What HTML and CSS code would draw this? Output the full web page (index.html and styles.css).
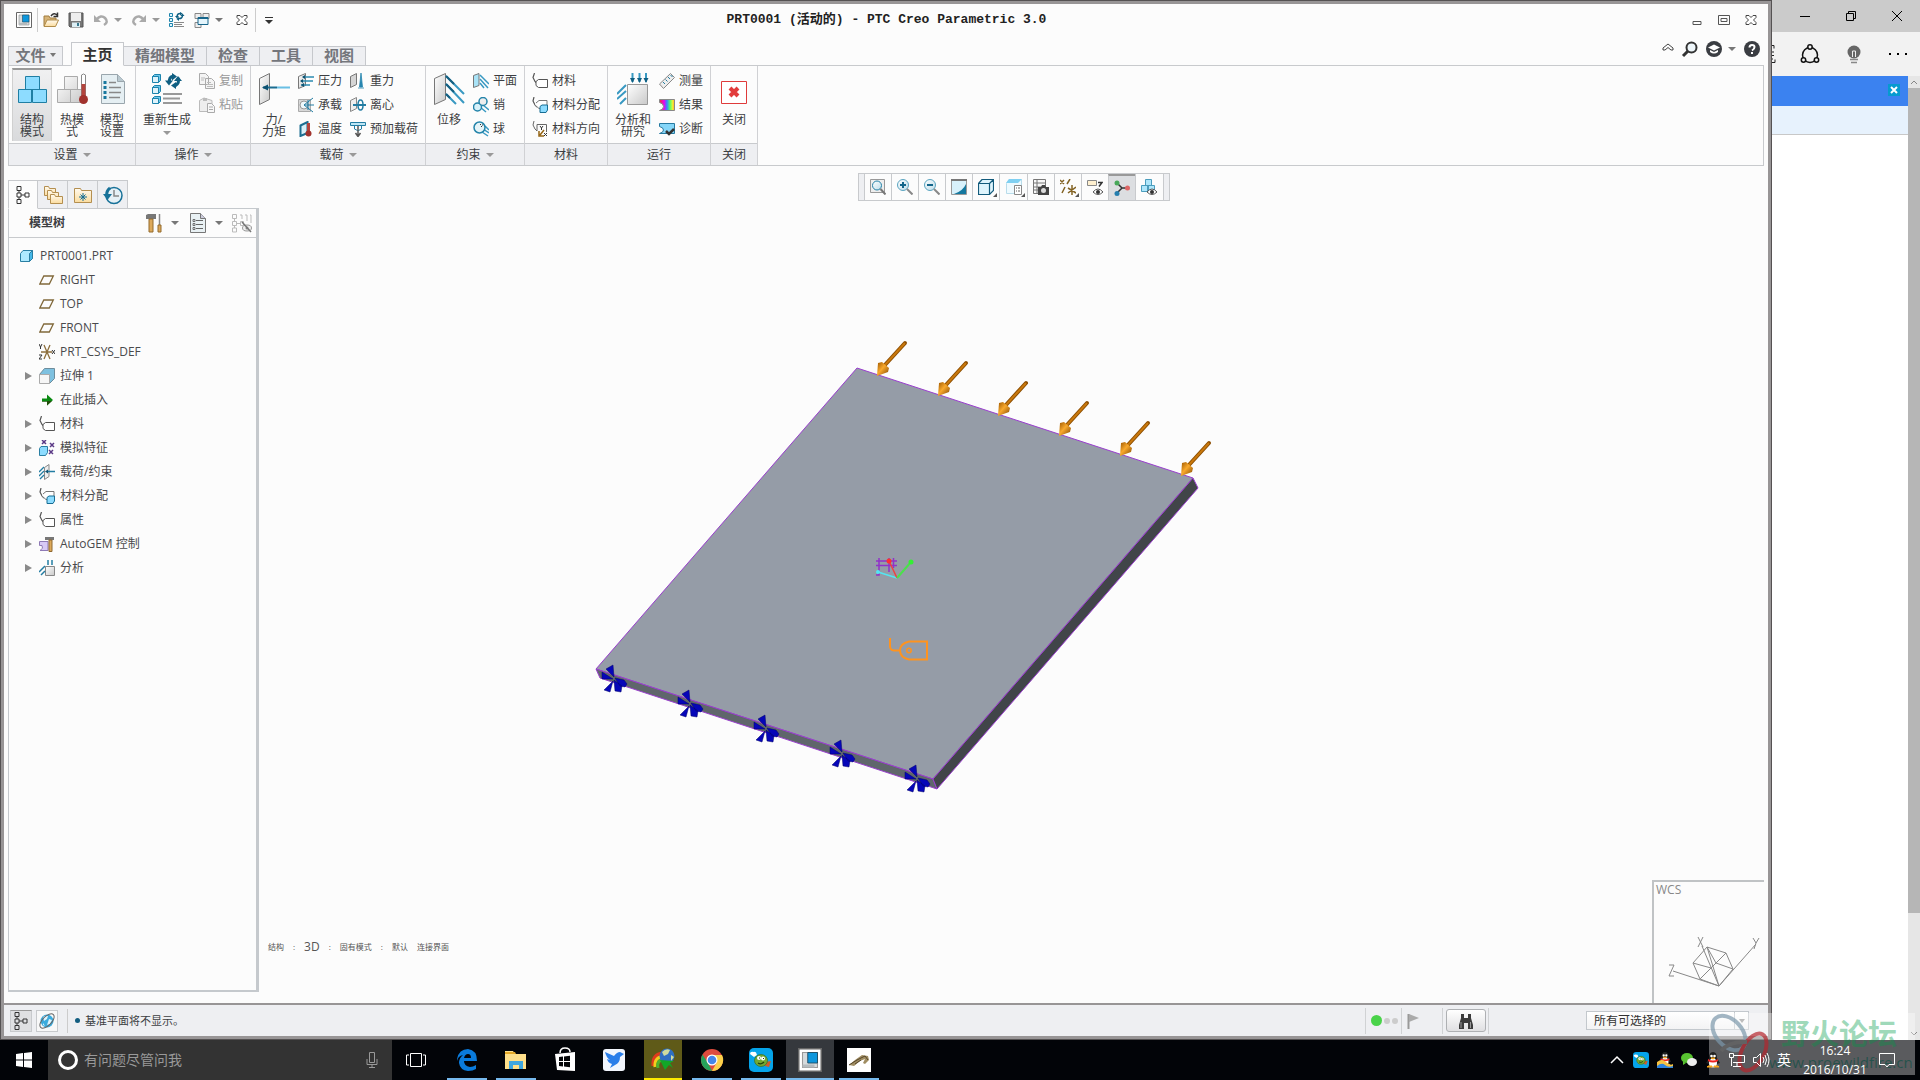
FILE: index.html
```html
<!DOCTYPE html>
<html lang="zh-CN">
<head>
<meta charset="utf-8">
<title>PRT0001 (活动的) - PTC Creo Parametric 3.0</title>
<link rel="stylesheet" href="styles.css">
</head>
<body>
<svg class="defs" aria-hidden="true">
  <defs>
    <linearGradient id="shade" x1="0" y1="0" x2="1" y2="1"><stop offset="0" stop-color="#fff"/><stop offset="1" stop-color="#c9c9c9"/></linearGradient>
    <linearGradient id="folder" x1="0" y1="0" x2="0" y2="1"><stop offset="0" stop-color="#fffaf0"/><stop offset="1" stop-color="#fbdc9e"/></linearGradient>
    <linearGradient id="glass" x1="0" y1="0" x2="1" y2="1"><stop offset="0" stop-color="#fff"/><stop offset="1" stop-color="#bcdce9"/></linearGradient>
    <linearGradient id="rainbow"><stop offset="0" stop-color="#e33"/><stop offset=".3" stop-color="#e0e"/><stop offset=".5" stop-color="#38f"/><stop offset=".7" stop-color="#5f6"/><stop offset=".9" stop-color="#fe3"/><stop offset="1" stop-color="#f82"/></linearGradient>
    <linearGradient id="brass" x1="0" y1="0" x2="1" y2="1"><stop offset="0" stop-color="#9c5600"/><stop offset=".45" stop-color="#f9a92c"/><stop offset="1" stop-color="#7c4300"/></linearGradient>
  </defs>
  <symbol id="i-app" viewBox="0 0 16 16"><path d="M.5.500h15v15H.5z" fill="#fff" stroke="#666"/><path d="M3 3h10v10H3z" fill="#d5dadc" stroke="#999" stroke-width=".7"/><path d="M3 11h8v2H3z" fill="#b4babd"/><path d="M6.500 3H13v7H6.500z" fill="#0d96dc" stroke="#1b4a61" stroke-width=".6"/></symbol>
  <symbol id="i-open" viewBox="0 0 16 16"><path d="M1 14V4h5l1 2h6v2" fill="#d6b377" stroke="#a07c3e"/><path d="M1 14.500 4 8h11.500l-3 6.500z" fill="url(#folder)" stroke="#b08c4a"/><path d="M8 4q3-4 6-1M14.500.5v4h-4" fill="none" stroke="#333" stroke-width="1.500"/></symbol>
  <symbol id="i-save" viewBox="0 0 16 16"><path d="M1 1h14v14H2l-1-1z" fill="#777" stroke="#555"/><path d="M3 1h10v8H3z" fill="#eee"/><path d="M4 10.500h8V15H4z" fill="#ddeff5"/><path d="M9 11h2v3H9z" fill="#38778c"/></symbol>
  <symbol id="i-undo" viewBox="0 0 16 16"><path d="M3 8q5-6 9-2t-1 7" fill="none" stroke="#aaa" stroke-width="2.500"/><path d="M1 3v7h7z" fill="#aaa"/></symbol>
  <symbol id="i-redo" viewBox="0 0 16 16"><path d="M13 8Q8 2 4 6t1 7" fill="none" stroke="#aaa" stroke-width="2.500"/><path d="M15 3v7H8z" fill="#aaa"/></symbol>
  <symbol id="i-regen" viewBox="0 0 32 32"><g fill="#dff3fb" stroke="#1d84ad"><path d="M1.500 3.500h6v6h-6zM1.500 14.500h6v6h-6zM1.500 25.500h6v5h-6z"/><path d="m1.500 3.500 2-2h6v6l-2 2v-6zM1.500 14.500l2-2h6v6l-2 2v-6zM1.500 25.500l2-2h6v5l-2 2v-5z" fill="#6dc8ec"/></g><path d="M18.500 10q-1-6 4-7M27 5q2 5-3 8" fill="none" stroke="#0f5f82" stroke-width="3"/><path d="m21 0 5 3.500-5 4zM25 9v7l-5-3.500zM14 7.500h8l-4 5zM23 8h8l-4-5z" fill="#0f5f82"/><path d="M12 21h19M12 25.500h17M12 30h19" stroke="#999" stroke-width="2"/></symbol>
  <symbol id="i-regen-s" viewBox="0 0 16 16"><path d="M.5 1.500h3v3h-3zM.5 6.500h3v3h-3zM.5 11.500h3v3h-3z" fill="#dff3fb" stroke="#1d84ad"/><path d="M8 5q0-4 4-3.500M13.500 3q0 4-4 3.500" fill="none" stroke="#0f5f82" stroke-width="1.500"/><path d="m11 0 2.500 1.500L11 3.500zM10 5v4L7.500 7zM6 4h4L8 6.500zM11.500 4h4l-2-2.500z" fill="#0f5f82"/><path d="M5 10.500h10M5 12.500h8M5 14.500h10" stroke="#888"/></symbol>
  <symbol id="i-windows" viewBox="0 0 16 16"><path d="M1 1.500h6v5H1zM9 1.500h6v5H9zM1 10.500h6v5H1z" fill="#eee" stroke="#888"/><path d="M4 5.500h10v7H4z" fill="#e4f5fc" stroke="#16658a"/><path d="M4 6h10" stroke="#16658a" stroke-width="2"/></symbol>
  <symbol id="i-hollowx" viewBox="0 0 12 12"><path d="M1 1.500h3l2 2 2-2h3v2L8.500 6 11 8.500v2H8l-2-2-2 2H1v-2L3.500 6 1 3.500z" fill="#fff" stroke="#444"/></symbol>
  <symbol id="i-blocks" viewBox="0 0 32 32"><path d="M9.500 3.500h14v13h-14zM2.500 16.500h13v13h-13zM16.500 16.500h14v13h-14z" fill="#8ddcff" stroke="#1f7ea3"/></symbol>
  <symbol id="i-thermal" viewBox="0 0 32 32"><g fill="url(#shade)" stroke="#aaa"><path d="M8.500 3.500h13v13h-13zM1.500 16.500h13v13h-13zM14.500 16.500h12v13h-12z"/></g><path d="M25.500 2q2-2 4 0v22h-4z" fill="#fff" stroke="#888"/><path d="M25.500 11h4v14h-4z" fill="#b4443d"/><circle cx="27.500" cy="26.500" r="4.500" fill="#a1322d"/></symbol>
  <symbol id="i-doc" viewBox="0 0 32 32"><path d="M5.500 1.500h16l7 7v22h-23z" fill="#e5eff3" stroke="#9aa6ad"/><path d="M21.500 1.500v7h7" fill="#b9c8cf" stroke="#9aa6ad"/><path d="M13 9.500h7M13 14.500h12M13 19.500h12M13 24.500h11" stroke="#888" stroke-width="1.500"/><path d="M9 8v3M9 13v3M9 18v3M9 23v3" stroke="#17779e" stroke-width="3"/></symbol>
  <symbol id="i-copy" viewBox="0 0 16 16"><path d="M.5.500h6l3 3v8h-9zM6.500 5.500h6l3 3v7h-9z" fill="#f4f4f4" stroke="#aaa"/><path d="M2 5h4M2 7h3M8 9.500h4M8 11.500h6M8 13.500h6" stroke="#bbb"/></symbol>
  <symbol id="i-paste" viewBox="0 0 16 16"><path d="M.5 3.500 5 1l8 2.500v11H.5z" fill="#eee" stroke="#bbb"/><path d="M4 1h4v3H4z" fill="#bbb"/><path d="M8.500 6.500h4l3 3v6h-7z" fill="#f8f8f8" stroke="#aaa"/><path d="M10 10h4M10 12.500h4" stroke="#aaa"/></symbol>
  <symbol id="i-force" viewBox="0 0 32 32"><path d="M1.500 5.500 11.500.5v26l-10 5z" fill="url(#shade)" stroke="#777"/><path d="M5 14.500h14" stroke="#1b6d91" stroke-width="2"/><path d="M19 14.500h13" stroke="#69bfe4" stroke-width="2"/><path d="m4 14.500 6-3v6z" fill="#0d5272"/></symbol>
  <symbol id="i-pressure" viewBox="0 0 16 16"><path d="M.5 3.500 7.500.5v12l-7 3z" fill="url(#shade)" stroke="#777"/><path d="M5 4h11M3 8h12M3 12h9" stroke="#2b8ab0" stroke-width="1.500"/><path d="m4 4 3-2v4zM2 8l3-2v4zM3 12l3-2v4z" fill="#0d5272"/></symbol>
  <symbol id="i-bearing" viewBox="0 0 16 16"><path d="M.5 2.500h12v12H.5z" fill="#d8d8d8" stroke="#aaa"/><circle cx="6" cy="8" r="4" fill="#eef8fb" stroke="#999"/><path d="M6 8 15 1M6 8h10M6 8l9 7M10 3v10" fill="none" stroke="#237da3"/></symbol>
  <symbol id="i-temp" viewBox="0 0 16 16"><path d="M2.500 4.500 9.500 1v11l-7 3z" fill="#d9f0f8" stroke="#1d6e91" stroke-width="2"/><path d="M9 2h3v10H9z" fill="#b4443d"/><circle cx="10.500" cy="12.500" r="3" fill="#a1322d"/></symbol>
  <symbol id="i-gravity" viewBox="0 0 16 16"><path d="M.5 3.500 6.500.5v11l-6 3z" fill="#d5d5d5" stroke="#777"/><path d="m9.500 14 1.500-14 1.500 14zM8 15h6" fill="#2786b0" stroke="#2786b0" stroke-width=".8"/></symbol>
  <symbol id="i-centri" viewBox="0 0 16 16"><path d="M.5 3.500 6.500.5v11l-6 3z" fill="#eee" stroke="#888"/><path d="M3 8h13" stroke="#237da3" stroke-width="2"/><ellipse cx="10.500" cy="8" rx="2.500" ry="5" fill="none" stroke="#237da3" stroke-width="1.500"/></symbol>
  <symbol id="i-preload" viewBox="0 0 16 16"><path d="M.5 1.500h15v3H.5z" fill="#bde6f5" stroke="#237da3"/><path d="M4.500 5v3l3 1.500h1l3-1.500V5" fill="none" stroke="#237da3"/><path d="M8 5v10M5.500 12 8 15.500l2.500-3.500" fill="none" stroke="#555" stroke-width="1.500"/></symbol>
  <symbol id="i-disp" viewBox="0 0 32 32"><path d="M1.500 5.500 12.500.5v26l-11 5z" fill="url(#shade)" stroke="#777"/><path d="m13 3 18 18M13 11l18 19M13 21l10 10" stroke="#3999c2" stroke-width="2"/><path d="m13 3 8 8M13 11l8 8M13 21l4 4" stroke="#155f80" stroke-width="2"/></symbol>
  <symbol id="i-plane" viewBox="0 0 16 16"><path d="M.5 2.500 6 .5v12l-5.500 2z" fill="#a9e3f7" stroke="#777"/><path d="m7 2 9 9M7 6l8 9M7 10l4 5" stroke="#3999c2" stroke-width="1.500"/></symbol>
  <symbol id="i-pin" viewBox="0 0 16 16"><path d="m10 8 6 5M7 10l6 5" stroke="#3999c2" stroke-width="1.500"/><circle cx="4.500" cy="10" r="4" fill="#d7f1fa" stroke="#2484aa" stroke-width="1.500"/><circle cx="10" cy="4.500" r="4" fill="#eee" stroke="#2484aa" stroke-width="1.500"/></symbol>
  <symbol id="i-ball" viewBox="0 0 16 16"><path d="m10 8 6 4M9 11l6 4M12 5l4 4" stroke="#3999c2" stroke-width="1.500"/><circle cx="6.500" cy="6.500" r="5.500" fill="#e6f4f8" stroke="#2484aa" stroke-width="1.500"/><path d="M7 3.500h1M8 5.500h1M9 4h1" stroke="#333"/></symbol>
  <symbol id="i-material" viewBox="0 0 16 16"><path d="M2.500 0 1 4.500l2 4 2.500 2.500" fill="none" stroke="#555" stroke-width="1.200"/><path d="M4 8.500 6.500 6.500h9v8h-9L4 12.500z" fill="#fff" stroke="#555"/></symbol>
  <symbol id="i-assign" viewBox="0 0 16 16"><path d="M2 0 1 4l2 4 2 2" fill="none" stroke="#555" stroke-width="1.200"/><path d="m4 6 3-2.500h8v8H7L3 8" fill="#fff" stroke="#777"/><path d="M8 9.500 10 8h5.500v5l-1.500 2.500H8z" fill="#8ddcff" stroke="#176d93"/></symbol>
  <symbol id="i-orient" viewBox="0 0 16 16"><path d="M2 0 1 4l2 4 2 2M5 10V3.500h9.500V11" fill="none" stroke="#666"/><path d="m8 5 1.500 2L11 5M9.500 7v2M12 12l3 3M15 12l-3 3" fill="none" stroke="#333"/><path d="m12 9-4 5M7 10v5h5" fill="none" stroke="#956515" stroke-width="1.500"/></symbol>
  <symbol id="i-study" viewBox="0 0 32 32"><path d="M10.500 11.500h20v20h-20z" fill="url(#shade)" stroke="#999"/><path d="M15.500 0v9M22.500 0v9M29 0v9M9 12l-9 9M9 18l-9 8M9 25l-6 6" stroke="#3999c2" stroke-width="2"/><path d="m13 5 2.500 5L18 5zM20 5l2.500 5L25 5zM26.500 5 29 10l2.500-5z" fill="#0f5f82"/></symbol>
  <symbol id="i-ruler" viewBox="0 0 16 16"><path d="m.5 11 11-10.500 4 4-11 11z" fill="#eee" stroke="#888"/><path d="m4 9 2 2M6.500 6.500l2 2M9 4l2 2M11.500 2l2 2" stroke="#237da3"/></symbol>
  <symbol id="i-result" viewBox="0 0 16 16"><path d="M.5 2.500h15v11h-15q4-1 4-4t-4-4z" fill="url(#rainbow)" stroke="#888"/></symbol>
  <symbol id="i-diag" viewBox="0 0 16 16"><path d="M.5 2.500h15v10h-15q4-1 4-3.500t-4-3.500z" fill="#85d6f8" stroke="#2679a0"/><path d="m7 10 3 3 5-5" fill="none" stroke="#333" stroke-width="2.500"/></symbol>
  <symbol id="i-close" viewBox="0 0 32 32"><path d="M3.500 8.500h25v22h-25z" fill="#fff" stroke="#df3b3b"/><path d="m12 15 8 8M20 15l-8 8" stroke="#e23c3c" stroke-width="4"/></symbol>
  <symbol id="i-tree" viewBox="0 0 16 20"><path d="M2 1.500h4v4H2zM2 8h4v4H2zM2 14.500h4v4H2zM10 8h4v4h-4zM4 5.500V8M4 12v2.500M6 10h4" fill="none" stroke="#333"/></symbol>
  <symbol id="i-folders" viewBox="0 0 20 20"><g fill="url(#folder)" stroke="#b48f50"><path d="M1.500 10.500v-9h4l1 2h6v7z"/><path d="M4.500 14.500v-9h4l1 2h6v7z"/><path d="M7.500 18.500v-9h4l1 2h7v7z"/></g></symbol>
  <symbol id="i-fav" viewBox="0 0 20 20"><path d="M1.500 17.500v-14h6l1 2h10v12z" fill="url(#folder)" stroke="#b48f50"/><path d="M10 8v8M6 12h8M7.500 9.500l5 5M12.500 9.500l-5 5" stroke="#136c94"/></symbol>
  <symbol id="i-history" viewBox="0 0 20 20"><circle cx="11" cy="10.500" r="8" fill="#e6f1f6" stroke="#177198" stroke-width="1.500"/><path d="M11 5v6h5" fill="none" stroke="#888" stroke-width="1.500"/><path d="M7 3q-4 3-3 8" fill="none" stroke="#177198" stroke-width="3"/><path d="M0 9h9l-4.500 6z" fill="#177198"/></symbol>
  <symbol id="i-tools" viewBox="0 0 18 20"><path d="M1 5V2l2-1h8v5H1z" fill="#777"/><path d="M4 6h4v13H4z" fill="#dda95a" stroke="#936a2c"/><path d="M14.500 1v11" stroke="#888" stroke-width="1.500"/><path d="M13 12h3v7h-3z" fill="#dda95a" stroke="#936a2c"/></symbol>
  <symbol id="i-sheet" viewBox="0 0 16 20"><path d="M.5.500h10l5 5v14H.5z" fill="#e9f1f4" stroke="#777"/><path d="M10.500.5v5h5" fill="#ccd" stroke="#777"/><path d="M6 7.500h7M6 11.500h7M6 15.500h7" stroke="#666"/><path d="M3 6.500h2v2H3zM3 10.500h2v2H3zM3 14.500h2v2H3z" fill="none" stroke="#555" stroke-width=".8"/></symbol>
  <symbol id="i-treehide" viewBox="0 0 20 20"><path d="M.5 1.500h4v4h-4zM.5 8.500h4v4h-4zM.5 15h4v4h-4zM2.500 5v4M2.500 12v3M4 10.500h5M8.500 8.500h3v4h-3zM8 2h2v4M13 2h2v6M18 2h1v8" fill="none" stroke="#bbb"/><ellipse cx="15" cy="15" rx="4.500" ry="3" fill="#eee" stroke="#999"/><circle cx="15" cy="15" r="1.500" fill="#888"/><path d="m10 9 9 10" stroke="#777" stroke-width="1.500"/></symbol>
  <symbol id="i-part" viewBox="0 0 16 16"><path d="M1.500 5.500 4 2.500h9.500v8l-3 3h-9z" fill="#aeeaff" stroke="#2a7fa3"/><path d="m10.500 13.500 3-3v-8l-3 3z" fill="#45b8e8" stroke="#2a7fa3"/></symbol>
  <symbol id="i-datum" viewBox="0 0 16 16"><path d="m.8 12 4-8h9.500l-4 8z" fill="none" stroke="#80683a" stroke-width="1.300"/></symbol>
  <symbol id="i-csys" viewBox="0 0 16 16"><path d="M2 8h11M5 1l6 14M11 1 5 15" stroke="#8c6e3c" stroke-width="1.300"/><path d="m0 0 1.500 3L3 0M1.500 3v2M0 11h3l-3 4h3M13 6l3 4M16 6l-3 4" fill="none" stroke="#333"/></symbol>
  <symbol id="i-extrude" viewBox="0 0 16 16"><path d="m.5 6.500 5-6h10v10l-5 5z" fill="#7ec1e0" stroke="#6e8d9c"/><path d="M.5 6.500h10v9H.5z" fill="#f6f6f6" stroke="#aaa"/></symbol>
  <symbol id="i-insert" viewBox="0 0 16 16"><path d="M3 6.500h5v-4l6 5.500-6 5.500v-4H3z" fill="#0a8a12"/><path d="M3 9h10l-5 4.500v-4H3z" fill="#234d0b"/></symbol>
  <symbol id="i-simfeat" viewBox="0 0 16 16"><path d="M.5 8.500 2 6.500h6.500v6l-2 3h-6z" fill="#8ddcff" stroke="#2a7fa3"/><path d="m3 0 4 4M7 0 3 4M11 3l4 4M15 3l-4 4M10 10l4 4M14 10l-4 4" stroke="#5b3a86" stroke-width="1.500"/></symbol>
  <symbol id="i-loads" viewBox="0 0 16 16"><path d="M5.500 3.500 10 .5v12l-4.500 3z" fill="#eee" stroke="#888"/><path d="M5 3 0 8M5 7l-5 5M5 11l-4 4M8 7.500h8" stroke="#237da3" stroke-width="1.300"/><path d="m6 7.500 3-2v4z" fill="#0d5272"/></symbol>
  <symbol id="i-autogem" viewBox="0 0 16 16"><path d="M.5 5.500H9v9H1q4-2 2-5H.5z" fill="#d8c9f6" stroke="#8e79b5"/><path d="M6 4V1h9v3z" fill="#777"/><path d="M10 4h3v11.500h-3z" fill="#dda95a" stroke="#8e6830"/></symbol>
  <symbol id="i-analysis" viewBox="0 0 16 16"><path d="M6.500 6.500h9v9h-9z" fill="url(#shade)" stroke="#888"/><path d="M9 0v5M13 0v5M6 6l-6 6M6 11l-4 4" stroke="#237da3" stroke-width="1.500"/></symbol>
  <symbol id="i-zoomfit" viewBox="0 0 16 16"><path d="M.5.500h14v13H.5z" fill="#eee" stroke="#999"/><circle cx="7" cy="6.500" r="4.500" fill="url(#glass)" stroke="#2380a6"/><path d="m10.500 10 5 5.500" stroke="#777" stroke-width="2"/></symbol>
  <symbol id="i-zoomin" viewBox="0 0 16 16"><circle cx="6" cy="6" r="5.500" fill="url(#glass)" stroke="#5aa4c0"/><path d="M3 6h6M6 3v6" stroke="#12658a" stroke-width="2"/><path d="m10 10 5.500 5.500" stroke="#888" stroke-width="2"/></symbol>
  <symbol id="i-zoomout" viewBox="0 0 16 16"><circle cx="6" cy="6" r="5.500" fill="url(#glass)" stroke="#5aa4c0"/><path d="M3 6h6" stroke="#12658a" stroke-width="2"/><path d="m10 10 5.500 5.500" stroke="#888" stroke-width="2"/></symbol>
  <symbol id="i-repaint" viewBox="0 0 16 16"><path d="M.5.500h15v15H.5z" fill="#d8f1fb" stroke="#999"/><path d="M0 0h16v2H0z" fill="#777"/><path d="M15 5q-3 7-12 10h12z" fill="#15789f"/></symbol>
  <symbol id="i-shade" viewBox="0 0 16 16"><path d="M.5 4.500 4 .5h11.500v11l-4 4H.5zM.5 4.500h11v11M11.500 4.500l4-4" fill="#dff5fd" stroke="#135b7c" stroke-width="1.200"/></symbol>
  <symbol id="i-views" viewBox="0 0 16 16"><path d="M.5 4.500 3 .5h12.500v10h-4v4H.5z" fill="#eefaff" stroke="#b9dcea"/><path d="M0 4 3 0h13l-4 4z" fill="#7fd0f2"/><path d="M8.500 6.500h7v9h-7z" fill="#fff" stroke="#888"/><path d="M10 9h1M12 9h2M10 12h1M12 12h2" stroke="#666"/></symbol>
  <symbol id="i-camera" viewBox="0 0 16 16"><path d="M.5.500h12v14H.5zM.5 4h12M.5 8h12M.5 11h12M4 0v14" fill="#f8f8f8" stroke="#777"/><path d="M5 8h3l1-2h3l1 2h3v8H5z" fill="#444"/><circle cx="10.500" cy="11.500" r="2.500" fill="#ddd"/></symbol>
  <symbol id="i-datums" viewBox="0 0 16 16"><path d="m0 1 4 4M4 1 0 5M10 0 7 5M5 8l-3 6M12 6v10M8 9l8 5M8 14l8-6" stroke="#836323" stroke-width="1.500"/></symbol>
  <symbol id="i-annot" viewBox="0 0 16 16"><path d="M.5 1.500h9v5h-9z" fill="#fff0cf" stroke="#888"/><path d="M11 3.500h4l-3 4" fill="none" stroke="#333" stroke-width="1.500"/><path d="M6 13q5-6 10 0-5 5-10 0" fill="#fff" stroke="#555"/><circle cx="11" cy="13" r="2" fill="#333"/></symbol>
  <symbol id="i-spin" viewBox="0 0 16 16"><path d="m3 3 5 5h5M8 8l-5 5" fill="none" stroke="#333" stroke-width="1.500"/><circle cx="3" cy="3" r="2.500" fill="#48a85a"/><circle cx="13.500" cy="8" r="2.500" fill="#dd6666"/><circle cx="3" cy="13.500" r="2.500" fill="#257eae"/></symbol>
  <symbol id="i-simshow" viewBox="0 0 16 16"><path d="M4.500.500h6v6h-6zM.5 6.500h6v6h-6zM7.500 6.500h6v6h-6z" fill="#aee6fb" stroke="#4b9dbd"/><path d="M6 13q5-6 10 0-5 5-10 0" fill="#fff" stroke="#555"/><circle cx="11" cy="13" r="2" fill="#333"/></symbol>
  <symbol id="i-globe" viewBox="0 0 16 16"><circle cx="8" cy="8" r="6.500" fill="#3babdd"/><path d="M4 4q3-2 5-1L8 6 5 8zM10 6l3 1-2 4-3 1zM4 10l2 3-2-1z" fill="#e1f4fb"/><ellipse cx="8" cy="8" rx="9" ry="4.500" transform="rotate(-45 8 8)" fill="none" stroke="#666"/></symbol>
  <symbol id="i-binoc" viewBox="0 0 16 16"><path d="M3 1h3v4h4V1h3v4l2 7v4h-5v-6H6v6H1v-4l2-7z" fill="#3c3c3c"/><path d="M3 9v6M12.500 9v6" stroke="#999"/></symbol>
  <symbol id="i-penguin" viewBox="0 0 16 16"><path d="M4 6q0-6 4-6t4 6l3 5-3 1H4l-3-1z" fill="#222"/><ellipse cx="8" cy="11" rx="4" ry="4.500" fill="#fff"/><circle cx="6.500" cy="4" r="1.300" fill="#fff"/><circle cx="9.500" cy="4" r="1.300" fill="#fff"/><path d="M3 7q5 3 10 0v2q-5 3-10 0z" fill="#e22"/><path d="M2 15h5v-1H3zM9 15h5l-1-1H9zM6 6h4l-2 1z" fill="#f9a61a" stroke="#f9a61a"/></symbol>
  <symbol id="i-bug" viewBox="0 0 24 24"><rect width="24" height="24" rx="5" fill="#05a4ea"/><path d="M1 6q0-3 4-2 2-1 3 3l-3 2z" fill="#fff"/><path d="m16 14 6-1-2 6-4-1z" fill="#ce5d2c"/><ellipse cx="12" cy="12.500" rx="6.500" ry="6" fill="#72a832" stroke="#3b6d22" stroke-width=".7"/><circle cx="10" cy="10" r="2" fill="#fff"/><circle cx="14" cy="10.500" r="2" fill="#fff"/><path d="M9 15q3 2 6-1M10 10h1M14 10.500h1" fill="none" stroke="#23410e" stroke-width="1.200"/></symbol>
  <g id="load"><path d="M7-9 28-32" stroke="#8b4d00" stroke-width="4" stroke-linecap="round"/><path d="M7-9 28-32" stroke="#c9780c" stroke-width="2"/><path d="m0 1 1-13 4-1 7 6-1 4z" fill="url(#brass)"/></g>
  <g id="fix" fill="#0606b8" stroke="#03036c" stroke-width=".5"><path d="m0-2-8-8 7-4zM-1 0l-11-7v7zM-1 2l-3 11-6-2zM0 1l8 6-1 6-6-1zM1-1l9 2 3 4-2 3-5-1z"/></g>
</svg>

<div class="desktop">
  <div class="windows">
    <main class="creo">
      <div class="creo-inner">
        <header class="titlebar">
          <div class="quick">
            <button aria-label="应用程序"><svg class="ic"><use href="#i-app"/></svg></button>
            <i class="rule"></i>
            <button aria-label="打开"><svg class="ic"><use href="#i-open"/></svg></button>
            <button aria-label="保存"><svg class="ic"><use href="#i-save"/></svg></button>
            <button aria-label="撤销"><svg class="ic"><use href="#i-undo"/></svg><i class="tri"></i></button>
            <button aria-label="重做"><svg class="ic"><use href="#i-redo"/></svg><i class="tri"></i></button>
            <button aria-label="重新生成"><svg class="ic"><use href="#i-regen-s"/></svg></button>
            <button aria-label="窗口"><svg class="ic"><use href="#i-windows"/></svg><i class="tri dark"></i></button>
            <button aria-label="关闭窗口"><svg class="ic xs"><use href="#i-hollowx"/></svg></button>
            <i class="rule"></i>
            <button aria-label="自定义"><i class="tri bar"></i></button>
          </div>
          <h1>PRT0001 (活动的) - PTC Creo Parametric 3.0</h1>
          <div class="winctl">
            <button aria-label="最小化"><svg class="ic xs" viewBox="0 0 12 12"><path d="M2 7.500h8v3H2z" fill="none" stroke="#555"/></svg></button>
            <button aria-label="最大化"><svg class="ic xs" viewBox="0 0 12 12"><path d="M.5 1.500h11v9H.5zM3 4.500h6v3H3z" fill="none" stroke="#555"/></svg></button>
            <button aria-label="关闭"><svg class="ic xs"><use href="#i-hollowx"/></svg></button>
          </div>
        </header>

        <div class="tabrow">
          <nav class="tabs">
            <button class="file">文件<i class="tri dark"></i></button>
            <button class="on">主页</button><button class="wide">精细模型</button><button>检查</button><button>工具</button><button>视图</button>
          </nav>
          <div class="help">
            <button aria-label="折叠功能区"><svg class="ic xs" viewBox="0 0 12 12"><path d="m1 5 5-4 5 4v2H9L6 4.500 3 7H1z" fill="none" stroke="#444"/></svg></button>
            <button aria-label="搜索"><svg class="ic" viewBox="0 0 16 16"><circle cx="9.500" cy="6.500" r="5" fill="#eef6fa" stroke="#333" stroke-width="2"/><path d="m6 10-5 5" stroke="#333" stroke-width="3"/></svg></button>
            <button aria-label="学习连接"><svg class="ic" viewBox="0 0 16 16"><circle cx="8" cy="8" r="8" fill="#3a3d42"/><path d="m2 6.500 6-3 6 3-6 3zM4 9v2q4 3 8 0V9L8 11z" fill="#fff"/></svg><i class="tri dark"></i></button>
            <button aria-label="帮助"><svg class="ic" viewBox="0 0 16 16"><circle cx="8" cy="8" r="8" fill="#3a3d42"/><path d="M5.500 6.500Q5.500 4 8 4t2.500 2T8 9.500M8 11v2" fill="none" stroke="#fff" stroke-width="2"/></svg></button>
          </div>
        </div>

        <section class="ribbon">
          <div class="group g-set"><div class="body">
            <button class="big on"><svg><use href="#i-blocks"/></svg><span>结构<br>模式</span></button>
            <button class="big"><svg><use href="#i-thermal"/></svg><span>热模<br>式</span></button>
            <button class="big"><svg><use href="#i-doc"/></svg><span>模型<br>设置</span></button>
          </div><h2>设置<i class="tri"></i></h2></div>
          <div class="group g-op"><div class="body">
            <button class="big wide"><svg><use href="#i-regen"/></svg><span>重新生成</span><i class="tri"></i></button>
            <div class="col off"><button><svg class="ic"><use href="#i-copy"/></svg>复制</button><button><svg class="ic"><use href="#i-paste"/></svg>粘贴</button></div>
          </div><h2>操作<i class="tri"></i></h2></div>
          <div class="group g-load"><div class="body">
            <button class="big"><svg><use href="#i-force"/></svg><span>力/<br>力矩</span></button>
            <div class="col"><button><svg class="ic"><use href="#i-pressure"/></svg>压力</button><button><svg class="ic"><use href="#i-bearing"/></svg>承载</button><button><svg class="ic"><use href="#i-temp"/></svg>温度</button></div>
            <div class="col"><button><svg class="ic"><use href="#i-gravity"/></svg>重力</button><button><svg class="ic"><use href="#i-centri"/></svg>离心</button><button><svg class="ic"><use href="#i-preload"/></svg>预加载荷</button></div>
          </div><h2>载荷<i class="tri"></i></h2></div>
          <div class="group g-con"><div class="body">
            <button class="big"><svg><use href="#i-disp"/></svg><span>位移</span></button>
            <div class="col"><button><svg class="ic"><use href="#i-plane"/></svg>平面</button><button><svg class="ic"><use href="#i-pin"/></svg>销</button><button><svg class="ic"><use href="#i-ball"/></svg>球</button></div>
          </div><h2>约束<i class="tri"></i></h2></div>
          <div class="group g-mat"><div class="body">
            <div class="col"><button><svg class="ic"><use href="#i-material"/></svg>材料</button><button><svg class="ic"><use href="#i-assign"/></svg>材料分配</button><button><svg class="ic"><use href="#i-orient"/></svg>材料方向</button></div>
          </div><h2>材料</h2></div>
          <div class="group g-run"><div class="body">
            <button class="big mid"><svg><use href="#i-study"/></svg><span>分析和<br>研究</span></button>
            <div class="col"><button><svg class="ic"><use href="#i-ruler"/></svg>测量</button><button><svg class="ic"><use href="#i-result"/></svg>结果</button><button><svg class="ic"><use href="#i-diag"/></svg>诊断</button></div>
          </div><h2>运行</h2></div>
          <div class="group g-close"><div class="body">
            <button class="big"><svg><use href="#i-close"/></svg><span>关闭</span></button>
          </div><h2>关闭</h2></div>
        </section>

        <div class="work">
          <aside class="side">
            <nav class="sidetabs">
              <button class="on" aria-label="模型树"><svg class="ic tall"><use href="#i-tree"/></svg></button>
              <button aria-label="文件夹浏览器"><svg class="ic lg"><use href="#i-folders"/></svg></button>
              <button aria-label="收藏夹"><svg class="ic lg"><use href="#i-fav"/></svg></button>
              <button aria-label="历史记录"><svg class="ic lg"><use href="#i-history"/></svg></button>
            </nav>
            <div class="panel">
              <div class="panelhead"><h2>模型树</h2>
                <button aria-label="设置"><svg class="ic lg"><use href="#i-tools"/></svg><i class="tri dark"></i></button>
                <button aria-label="显示"><svg class="ic lg"><use href="#i-sheet"/></svg><i class="tri dark"></i></button>
                <button aria-label="隐藏"><svg class="ic lg"><use href="#i-treehide"/></svg></button>
              </div>
              <ul class="tree">
                <li class="root"><svg class="ic"><use href="#i-part"/></svg>PRT0001.PRT</li>
                <li><svg class="ic"><use href="#i-datum"/></svg>RIGHT</li>
                <li><svg class="ic"><use href="#i-datum"/></svg>TOP</li>
                <li><svg class="ic"><use href="#i-datum"/></svg>FRONT</li>
                <li><svg class="ic"><use href="#i-csys"/></svg>PRT_CSYS_DEF</li>
                <li class="more"><svg class="ic"><use href="#i-extrude"/></svg>拉伸 1</li>
                <li><svg class="ic"><use href="#i-insert"/></svg>在此插入</li>
                <li class="more"><svg class="ic"><use href="#i-material"/></svg>材料</li>
                <li class="more"><svg class="ic"><use href="#i-simfeat"/></svg>模拟特征</li>
                <li class="more"><svg class="ic"><use href="#i-loads"/></svg>载荷/约束</li>
                <li class="more"><svg class="ic"><use href="#i-assign"/></svg>材料分配</li>
                <li class="more"><svg class="ic"><use href="#i-material"/></svg>属性</li>
                <li class="more"><svg class="ic"><use href="#i-autogem"/></svg>AutoGEM 控制</li>
                <li class="more"><svg class="ic"><use href="#i-analysis"/></svg>分析</li>
              </ul>
            </div>
          </aside>

          <section class="canvas">
            <svg class="model" viewBox="259 166 1509 837" aria-label="模型">
              <g stroke="#9a3fce" stroke-width="1" stroke-linejoin="round">
                <path d="M596 669 857 368 1193 478 933 779z" fill="#959ca7"/>
                <path d="m596 669 337 110 4 10-337-111z" fill="#5f666b"/>
                <path d="m933 779 260-301 5 10-261 301z" fill="#414549"/>
              </g>
              <use href="#load" x="877" y="375"/><use href="#load" x="938" y="395"/><use href="#load" x="998" y="415"/><use href="#load" x="1059" y="435"/><use href="#load" x="1120" y="455"/><use href="#load" x="1181" y="475"/>
              <use href="#fix" x="614" y="679"/><use href="#fix" x="690" y="704"/><use href="#fix" x="766" y="729"/><use href="#fix" x="842" y="754"/><use href="#fix" x="917" y="779"/>
              <path d="M876 561h21M876 565.500h21M879 558v17h-3M889 558v14M893.500 558v10" fill="none" stroke="#9132c9" stroke-width="1.500"/>
              <path d="M897 578 878 572" stroke="#53e6f2" stroke-width="1.500"/><path d="M897 578 889 561" stroke="#f04040" stroke-width="1.500"/><path d="M897 578 911 562" stroke="#4be04b" stroke-width="2"/>
              <circle cx="878" cy="572" r="2" fill="#53e6f2"/><circle cx="889" cy="561" r="2.500" fill="#ff2f2f"/><circle cx="911" cy="562" r="2.500" fill="#33f033"/>
              <g fill="none" stroke="#ff931e" stroke-width="2"><path d="M890 638v8q0 4 4 4.500h6M909 641.500h18v18h-18q-9-2-9-9t9-9z"/><circle cx="909" cy="650.500" r="2.200" stroke-width="1.500"/></g>
            </svg>
            <div class="viewbar">
              <button aria-label="重新调整"><svg class="ic"><use href="#i-zoomfit"/></svg></button>
              <button aria-label="放大"><svg class="ic"><use href="#i-zoomin"/></svg></button>
              <button aria-label="缩小"><svg class="ic"><use href="#i-zoomout"/></svg></button>
              <button aria-label="重画"><svg class="ic"><use href="#i-repaint"/></svg></button>
              <button class="menu" aria-label="显示样式"><svg class="ic"><use href="#i-shade"/></svg></button>
              <button class="menu" aria-label="已保存方向"><svg class="ic"><use href="#i-views"/></svg></button>
              <button aria-label="视图管理器"><svg class="ic"><use href="#i-camera"/></svg></button>
              <button class="menu" aria-label="基准显示过滤器"><svg class="ic"><use href="#i-datums"/></svg></button>
              <button aria-label="注释显示"><svg class="ic"><use href="#i-annot"/></svg></button>
              <button class="on" aria-label="旋转中心"><svg class="ic"><use href="#i-spin"/></svg></button>
              <button aria-label="模拟显示"><svg class="ic"><use href="#i-simshow"/></svg></button>
            </div>
            <p class="caption"><span>结构</span><span>:</span><b>3D</b><span>:</span><span>固有模式</span><span>:</span><span>默认</span><span>连接界面</span></p>
            <div class="wcs"><span>WCS</span>
              <svg viewBox="1653 940 112 63"><g fill="none" stroke="#888"><path d="m1708 947 19 6 7 16-14 17-19-7-7-16zM1701 979l26-26M1694 963l18 5M1708 947l9 16 17 6M1708 947l12 39M1712 968l5-5M1720 986l37-42M1720 986l-46-15M1720 986l-17-40"/><path d="m1699 937 5 10M1704 937l-5 10M1754 938l3 5 3-5M1757 943l-2 6M1670 965h5l-5 11h5"/></g></svg>
            </div>
          </section>
        </div>

        <footer class="status">
          <button class="sq on" aria-label="导航器"><svg class="ic tall"><use href="#i-tree"/></svg></button>
          <button class="sq" aria-label="浏览器"><svg class="ic"><use href="#i-globe"/></svg></button>
          <i class="rule"></i>
          <p>基准平面将不显示。</p>
          <div class="state">
            <div class="lights"><i class="green"></i><i></i><i></i></div>
            <div class="flag"><svg class="ic" viewBox="0 0 16 16"><path d="M2.500 1v15" stroke="#999" stroke-width="2"/><path d="m3 1 10 4-10 4z" fill="#aaa"/></svg></div>
            <div class="find"><button aria-label="查找"><svg class="ic"><use href="#i-binoc"/></svg></button></div>
          </div>
          <div class="filter"><select aria-label="选择过滤器"><option>所有可选择的</option></select></div>
        </footer>
      </div>
    </main>

    <aside class="browser">
      <div class="b-title">
        <button aria-label="最小化"><svg class="ic" viewBox="0 0 16 16"><path d="M3 8.500h10" stroke="#000"/></svg></button>
        <button aria-label="还原"><svg class="ic" viewBox="0 0 16 16"><path d="M3.500 5.500h7v7h-7zM5.500 5V3.500h7v7H11" fill="none" stroke="#000"/></svg></button>
        <button aria-label="关闭"><svg class="ic" viewBox="0 0 16 16"><path d="m3 3 10 10M13 3 3 13" stroke="#000"/></svg></button>
      </div>
      <div class="b-tools">
        <svg class="edge" viewBox="0 0 4 20"><path d="M0 1.500h2v3M0 8h2M0 11.500h2M0 15h1M0 18.500h3v-3" fill="none" stroke="#222"/></svg>
        <button aria-label="共享"><svg class="ic lg" viewBox="0 0 20 20"><circle cx="10" cy="11" r="7.500" fill="none" stroke="#111" stroke-width="1.500"/><g fill="#f2f2f2" stroke="#111" stroke-width="1.500"><circle cx="10" cy="3" r="2.200"/><circle cx="3.500" cy="16" r="2.200"/><circle cx="16.500" cy="16" r="2.200"/></g></svg></button>
        <button aria-label="反馈"><svg class="ic lg" viewBox="0 0 20 20"><circle cx="10" cy="8" r="6.500" fill="#666"/><path d="M8.500 13V7h3v6" fill="none" stroke="#eee"/><path d="M6 15.500h8M7 18.500h6" stroke="#888" stroke-width="1.500"/></svg></button>
        <button aria-label="更多"><svg class="ic lg" viewBox="0 0 20 20"><path d="M1 9h2v2H1zM9 9h2v2H9zM17 9h2v2h-2z"/></svg></button>
      </div>
      <div class="b-page">
        <div class="b-doc"><div class="b-blue"><button aria-label="关闭"><svg class="ic xs" viewBox="0 0 12 12"><path d="m3 3 6 6M9 3 3 9" stroke="#fff" stroke-width="2"/></svg></button></div><div class="b-light"></div></div>
        <div class="b-scroll"><svg class="ic xs" viewBox="0 0 12 12"><path d="m3 8 3-3 3 3" fill="none" stroke="#888"/></svg><div class="thumb"></div><div class="rest"></div><svg class="ic xs" viewBox="0 0 12 12"><path d="m3 4 3 3 3-3" fill="none" stroke="#888"/></svg></div>
      </div>
    </aside>
  </div>

  <footer class="taskbar">
    <button class="start" aria-label="开始"><svg class="ic" viewBox="0 0 16 16"><path d="m0 2 7-1v6.500H0zM8 1l8-1v7.500H8zM0 8.500h7V15l-7-1zM8 8.500h8V16l-8-1z" fill="#fff"/></svg></button>
    <label class="search"><i class="ring"></i><input type="text" placeholder="有问题尽管问我" aria-label="搜索"><svg class="ic" viewBox="0 0 16 16"><path d="M5.500.500h5v10h-5zM3 7v5.500h10V7M8 13v2.500M5 15.500h6" fill="none" stroke="#999"/></svg></label>
    <nav class="apps">
      <button class="task" aria-label="任务视图"><svg class="ic lg" viewBox="0 0 20 20"><path d="M4.500 3.500h11v13h-11zM3 5H.5v10H3M17 5h2.500v10H17" fill="none" stroke="#fff"/></svg></button>
      <button class="run" aria-label="Edge"><svg class="ic xl" viewBox="0 0 24 24"><path d="M2 11Q4 1 13 1q9 1 9 12H9q0 5 6 6 3 0 6-2v4q-3 2-8 2-8-1-9-8 0-5 4-8-5 1-6 6zm7-1h7q0-4-3-4t-4 4z" fill="#0a7bdc"/></svg></button>
      <button class="run" aria-label="文件资源管理器"><svg class="ic xl" viewBox="0 0 24 24"><path d="M1 3h8l2 3h11v15H1z" fill="#ffe08a"/><path d="M1 4h10l1 2H1z" fill="#e6aa28"/><path d="M5 21v-8h14v8h-4v-4H9v4z" fill="#3fa7e0"/></svg></button>
      <button aria-label="应用商店"><svg class="ic xl" viewBox="0 0 24 24"><path d="m2 6 20-2v19L4 22z" fill="#fff"/><path d="M7 5q0-5 5-5t5 4" fill="none" stroke="#fff" stroke-width="1.500"/><path d="m6 9 4-.5V13H6zM11 8.500l6-.8V13h-6zM6 14h4v4.500L6 18zM11 14h6v5.300l-6-.7z" fill="#050608"/></svg></button>
      <button aria-label="迅雷"><svg class="ic xl" viewBox="0 0 24 24"><rect x="1" y="1" width="22" height="22" rx="3" fill="#f2f6fd"/><path d="m3 4 9 4q3-4 6-4l4 2-4 3q0 6-5 8l-5 3 2-4q-4-1-5-5l3 1q-4-3-5-8z" fill="#2a7ee9"/></svg></button>
      <button class="run idm" aria-label="IDM"><svg class="ic xl" viewBox="0 0 24 24"><path d="M2 18Q1 6 12 5" fill="none" stroke="#df3b1d" stroke-width="3"/><path d="M4 19Q3 9 13 8" fill="none" stroke="#f3cd1c" stroke-width="3"/><path d="M7 20q-2-8 7-9" fill="none" stroke="#4fb22d" stroke-width="3"/><circle cx="16" cy="8" r="7.500" fill="#2f6fc2"/><path d="M11 4q4-4 8-2l-2 4-4 2zM20 7l3 2-3 4z" fill="#cfdc9f"/><path d="m9 12 14 1-4 2 3 5-4-3-4 5z" fill="#12a727"/></svg></button>
      <button class="run" aria-label="Chrome"><svg class="ic xl" viewBox="0 0 24 24"><circle cx="12" cy="12" r="11" fill="#de4c3e"/><path d="M2.500 6.500 8 15l4 8A11 11 0 0 1 2.500 6.500z" fill="#25a25a"/><path d="M12 7h10a11 11 0 0 1-10 16l5-9z" fill="#fbd04a"/><circle cx="12" cy="12" r="5.500" fill="#fff"/><circle cx="12" cy="12" r="4.300" fill="#4586e8"/></svg></button>
      <button class="run" aria-label="游戏"><svg class="ic xl"><use href="#i-bug"/></svg></button>
      <button class="run on" aria-label="Creo"><svg class="ic xl"><use href="#i-app"/></svg></button>
      <button class="run" aria-label="野火"><svg class="ic xl" viewBox="0 0 24 24"><path d="M0 0h24v24H0z" fill="#fff"/><path d="m2 17 6-5 7-5 6 1 1 4-4 4-2-1 2-4-5 2-6 5z" fill="#a08d62"/><path d="m2 17 8-5 8-4M8 16l6-4M18 8l3 4" fill="none" stroke="#54452a"/></svg></button>
    </nav>
    <div class="tray">
      <button aria-label="显示隐藏的图标"><svg class="ic" viewBox="0 0 16 16"><path d="m2 11 6-6 6 6" fill="none" stroke="#fff" stroke-width="1.500"/></svg></button>
      <button aria-label="游戏"><svg class="ic"><use href="#i-bug"/></svg></button>
      <button aria-label="QQ 浏览器"><svg class="ic" viewBox="0 0 16 16"><use href="#i-penguin" width="16" height="14"/><path d="M0 10q5-4 9 0t7 2v4H0z" fill="#f5c242"/><path d="M0 14q5-4 8-1t8 1v2H0z" fill="#2c83de"/></svg></button>
      <button aria-label="微信"><svg class="ic" viewBox="0 0 16 16"><ellipse cx="6" cy="6" rx="6" ry="5" fill="#58c331"/><ellipse cx="11" cy="10" rx="5" ry="4" fill="#eee"/><path d="m2 9 0 4 3-2z" fill="#58c331"/></svg></button>
      <button aria-label="QQ"><svg class="ic"><use href="#i-penguin"/></svg></button>
      <button aria-label="网络"><svg class="ic" viewBox="0 0 16 16"><path d="M5 3.500h10.500v7H4M8 11v3M4 14.500h8M.5 1.500h4v4h-4zM2.500 6v8" fill="none" stroke="#fff"/></svg></button>
      <button aria-label="音量"><svg class="ic" viewBox="0 0 16 16"><path d="M.5 5.500h3l4-4v13l-4-4h-3zM10 5q2 3 0 6M12 3q3 5 0 10M14 1q4 7 0 14" fill="none" stroke="#fff"/></svg></button>
      <button class="ime">英</button>
      <time>16:24<br>2016/10/31</time>
      <button aria-label="操作中心"><svg class="ic" viewBox="0 0 16 16"><path d="M.5 1.500h15v11H10l-2 2.500-2-2.500H.5z" fill="none" stroke="#fff"/></svg></button>
    </div>
  </footer>

  <div class="watermark">
    <svg viewBox="0 0 60 62"><g fill="none" stroke-width="4"><ellipse cx="20" cy="20" rx="20" ry="13" transform="rotate(48 20 20)" stroke="#7c98ab"/><ellipse cx="44" cy="39" rx="20" ry="11" transform="rotate(118 44 39)" stroke="#b4252d"/><path d="M12 38q8-10 26-9" stroke="#666"/></g></svg>
    <strong>野火论坛</strong>
    <span>www.proewildfire.cn</span>
  </div>
</div>
</body>
</html>
```
FILE: styles.css
```css
* { box-sizing: border-box; }
body, h1, h2, p, ul { margin: 0; padding: 0; }
body { font: 12px/12px "Open Sans", "Noto Sans CJK SC", sans-serif; color: #3c3e42; background: #fff; }
button { margin: 0; padding: 0; border: 0; background: none; font: inherit; color: inherit; display: flex; align-items: center; }
ul { list-style: none; }
.defs { position: absolute; width: 0; height: 0; }

.ic { width: 16px; height: 16px; flex: none; display: block; overflow: visible; }
.ic.xs { width: 12px; height: 12px; }
.ic.tall { height: 20px; }
.ic.lg { width: 20px; height: 20px; }
.ic.xl { width: 24px; height: 24px; }
.tri { flex: none; width: 0; height: 0; border: 4px solid transparent; border-top-color: #999; border-bottom: 0; }
.tri.dark { border-top-color: #777; }
.tri.bar { position: relative; border-top-color: #333; }
.tri.bar::before { content: ""; position: absolute; left: -4px; top: -7px; width: 8px; height: 1px; background: #333; }
.rule { width: 1px; height: 24px; background: #ccc; }

.desktop { position: relative; display: flex; flex-direction: column; height: 100vh; }
.windows { flex: 1; display: flex; min-height: 0; }

/* Creo window */
.creo { flex: 1; min-width: 0; display: flex; border: 1px solid #555253; padding: 3px; background: #989596; }
.creo-inner { flex: 1; min-width: 0; display: flex; flex-direction: column; background: #fcfcfc; }

.titlebar { height: 34px; flex: none; display: grid; grid-template-columns: 1fr auto 1fr; align-items: center; padding: 0 11px 2px 12px; }
.titlebar h1 { font: bold 13px/16px "Liberation Mono", "Noto Sans CJK SC", monospace; color: #222; }
.quick { display: flex; align-items: center; gap: 9px; }
.quick .rule { margin: 0 -4px; }
.quick button { gap: 5px; }
.quick .xs { margin: 0 2px 0 4px; }
.quick .tri.bar { margin: 4px 4px 0; }
.winctl { display: flex; justify-content: flex-end; gap: 15px; }

.tabrow { height: 28px; flex: none; display: flex; justify-content: space-between; padding: 0 8px 0 4px; margin-bottom: -1px; position: relative; }
.tabs { display: flex; align-items: flex-end; font-weight: bold; font-size: 15px; line-height: 16px; color: #74767c; }
.tabs button { height: 20px; width: 53px; padding-bottom: 2px; justify-content: center; background: #eeeff2; border: solid #c6c8cc; border-width: 1px 1px 1px 0; }
.tabs .file { width: 55px; border-left-width: 1px; margin-right: 8px; gap: 4px; }
.tabs .file .tri { border-width: 4px 3px 0; }
.tabs .wide { width: 83px; }
.tabs .on { width: 53px; height: 24px; padding-bottom: 0; background: #fcfcfc; color: #333; border-left-width: 1px; border-bottom-color: #fcfcfc; }
.help { display: flex; align-items: center; gap: 8px; padding-bottom: 6px; }
.help button { gap: 6px; }

.ribbon { display: flex; flex: none; margin: 0 4px; border: 1px solid #c8cacd; }
.group { border-right: 1px solid #d0d1d4; }
.group .body { display: flex; gap: 4px; height: 77px; padding: 2px 0 0 3px; }
.group h2 { height: 22px; display: flex; align-items: center; justify-content: center; gap: 5px; font-weight: normal; font-size: 12px; background: #eeeff2; border-top: 1px solid #c8cacd; }
.g-set { width: 127px; }
.g-set .body { gap: 0; }
.g-op { width: 115px; }
.g-load { width: 175px; }
.g-con { width: 99px; }
.g-mat { width: 83px; }
.g-run { width: 103px; }
.g-close { width: 47px; }
.big { width: 40px; height: 73px; padding-top: 4px; flex: none; flex-direction: column; border-top: 1px solid transparent; }
.big svg { width: 32px; height: 32px; margin-bottom: 9px; flex: none; }
.big span { white-space: nowrap; text-align: center; }
.big .tri { margin-top: 5px; }
.big.wide { width: 56px; }
.big.mid { width: 44px; }
.big.on { background: linear-gradient(#f0f0f1, #d9dadc); border-top: 2px solid #999; padding-top: 3px; border-left: 1px solid #d0d0d0; border-right: 1px solid #d0d0d0; }
.col { padding-top: 1px; }
.col:first-child, .col + .col { margin-left: 4px; }
.col button { height: 24px; gap: 4px; white-space: nowrap; }
.col.off { color: #999; }

.work { flex: 1; display: flex; min-height: 0; }
.side { width: 251px; flex: none; margin: 14px 0 11px 4px; display: flex; flex-direction: column; }
.sidetabs { display: flex; height: 29px; position: relative; margin-bottom: -1px; }
.sidetabs button { width: 30px; justify-content: center; background: #eeeff2; border: solid #c8cacd; border-width: 1px 1px 1px 0; }
.sidetabs .on { background: #fcfcfc; border-left-width: 1px; border-bottom-color: #fcfcfc; }
.panel { flex: 1; border: 1px solid #c5c9cd; border-width: 1px 3px 2px 1px; }
.panelhead { display: flex; align-items: center; height: 29px; gap: 9px; padding: 0 4px 0 20px; border-bottom: 1px solid #c8cacd; }
.panelhead h2 { flex: 1; font-size: 12px; }
.panelhead button { gap: 7px; }
.tree { padding-top: 6px; color: #4a4a4c; }
.tree li { display: flex; align-items: center; gap: 5px; height: 24px; padding-left: 30px; }
.tree .root { padding-left: 10px; }
.tree .more { padding-left: 16px; }
.tree .more::before { content: ""; border: 4px solid transparent; border-left: 7px solid #8a8a8a; border-right: 0; margin-right: 2px; }

.canvas { flex: 1; position: relative; min-width: 0; padding-top: 7px; }
.model { position: absolute; inset: 0; width: 100%; height: 100%; }
.viewbar { position: relative; display: flex; width: 312px; margin: 0 auto; height: 28px; padding: 0 5px; border: 1px solid #c8cacd; background: #eeeff2; }
.viewbar button { position: relative; flex: 1; justify-content: center; background: #fcfcfc; border-left: 1px solid #c8cacd; }
.viewbar button:last-child { border-right: 1px solid #c8cacd; }
.viewbar .on { background: #dcdee1; border-top: 2px solid #999; }
.viewbar .menu::after { content: ""; position: absolute; right: 2px; bottom: 3px; border: 2px solid transparent; border-right-color: #555; border-bottom-color: #555; }
.caption { position: absolute; left: 9px; bottom: 50px; display: flex; align-items: center; gap: 9px; font-size: 8px; color: #555; }
.caption b { font: 12px/12px "Open Sans", sans-serif; }
.wcs { position: absolute; right: 4px; bottom: 0; width: 112px; height: 123px; border: solid #c0c3c5; border-width: 2px 0 0 2px; display: flex; flex-direction: column; justify-content: space-between; color: #888; }
.wcs span { padding: 2px; font-size: 12px; }
.wcs svg { width: 112px; height: 63px; margin-left: -2px; overflow: visible; }

.status { flex: none; height: 33px; display: flex; align-items: center; border-top: 2px solid #989596; background: #eeeff2; padding: 0 19px 0 6px; }
.sq { width: 22px; height: 22px; justify-content: center; border: 1px solid #c8cacd; background: #f8f8f8; margin-right: 4px; }
.sq.on { background: #dfe0e2; border-top-color: #999; }
.status .rule { margin: 0 7px 0 5px; }
.status p { flex: 1; display: flex; align-items: center; gap: 5px; font-size: 11px; }
.status p::before { content: ""; width: 5px; height: 5px; border-radius: 50%; background: #125d80; }
.state { display: flex; height: 26px; border-left: 1px solid #d0d2d4; }
.state > div { display: flex; align-items: center; border-right: 1px solid #d0d2d4; }
.lights { width: 36px; gap: 2px; padding-left: 5px; }
.lights i { width: 6px; height: 6px; border-radius: 50%; background: #ccc; }
.lights .green { width: 11px; height: 11px; background: #49d349; }
.flag { width: 41px; padding-left: 4px; }
.find { width: 46px; justify-content: center; }
.find button { width: 40px; height: 23px; justify-content: center; border: 1px solid #aeb0b3; border-radius: 3px; background: linear-gradient(#fff, #e0e0e2); }
.filter { position: relative; margin-left: 97px; }
.filter select { appearance: none; display: block; width: 163px; height: 19px; padding: 0 22px 0 7px; border: 1px solid #c3c8cd; border-radius: 0; background: linear-gradient(#fff, #f3f3f4); font: inherit; color: #333; }
.filter::after { content: ""; position: absolute; right: 4px; top: 8px; border: 3px solid transparent; border-top: 4px solid #999; border-bottom: 0; }
.filter::before { content: ""; position: absolute; right: 14px; top: 1px; bottom: 1px; width: 1px; background: #c3c8cd; }

/* Browser behind the main window */
.browser { width: 148px; flex: none; display: flex; flex-direction: column; }
.b-title { height: 32px; background: #cbcbcb; display: flex; justify-content: flex-end; align-items: center; gap: 30px; padding: 0 15px 0 0; }
.b-tools { height: 44px; background: #f2f2f2; display: flex; justify-content: flex-end; align-items: center; gap: 24px; padding-right: 12px; }
.edge { width: 4px; height: 20px; margin-right: auto; }
.b-page { flex: 1; display: flex; }
.b-doc { flex: 1; }
.b-blue { height: 30px; display: flex; align-items: center; justify-content: flex-end; padding: 0 8px 2px 0; background: #3b82f0; }
.b-blue button { background: #069ad0; }
.b-light { height: 29px; background: #e7f2fd; border-bottom: 1px solid #c8c8c8; }
.b-scroll { width: 12px; display: flex; flex-direction: column; background: #e6e6e6; }
.b-scroll .thumb { flex: 825; background: #b6b6b6; }
.b-scroll .rest { flex: 115; }

.taskbar { flex: none; height: 40px; display: flex; background: #020408; color: #fff; }
.start { width: 48px; justify-content: center; }
.search { width: 344px; display: flex; align-items: center; padding: 0 12px 0 10px; gap: 6px; background: #333; }
.ring { width: 20px; height: 20px; border: 3px solid #fff; border-radius: 50%; }
.search input { flex: 1; min-width: 0; padding: 0; border: 0; background: none; font: 14px/20px "Open Sans", "Noto Sans CJK SC", sans-serif; color: #fff; outline: 0; }
.search input::placeholder { color: #999; opacity: 1; }
.apps { display: flex; gap: 1px; }
.apps button { width: 48px; justify-content: center; border-bottom: 2px solid transparent; border-top: 2px solid transparent; }
.apps .task { margin-right: 2px; }
.apps .run { background: linear-gradient(#76b9ed, #76b9ed) 50% 100% / 40px 2px no-repeat border-box; }
.apps .idm { background: linear-gradient(#ffea00, #ffea00) 50% 100% / 38px 2px no-repeat border-box, linear-gradient(#5f5a18, #5f5a18) 50% 0 / 38px 100% no-repeat border-box; }
.apps .on { background: linear-gradient(#76b9ed, #76b9ed) 50% 100% / 48px 2px no-repeat border-box, #35383d; }
.tray { position: relative; z-index: 2; margin-left: auto; display: flex; align-items: center; gap: 8px; padding-right: 25px; }
.ime { font-size: 14px; }
.tray time { width: 72px; text-align: center; line-height: 19px; }

.watermark { position: absolute; z-index: 1; right: 5px; bottom: 5px; width: 206px; height: 62px; display: grid; grid-template-columns: 1fr 148px; grid-template-rows: 38px 24px; background: rgba(255, 255, 255, .35); }
.watermark svg { grid-row: 1 / 3; width: 60px; height: 62px; opacity: .7; }
.watermark strong { padding-left: 12px; font-size: 29px; line-height: 42px; color: rgba(0, 154, 71, .38); }
.watermark span { font: 15px/22px "Open Sans", sans-serif; color: rgba(20, 80, 70, .75); }
```
